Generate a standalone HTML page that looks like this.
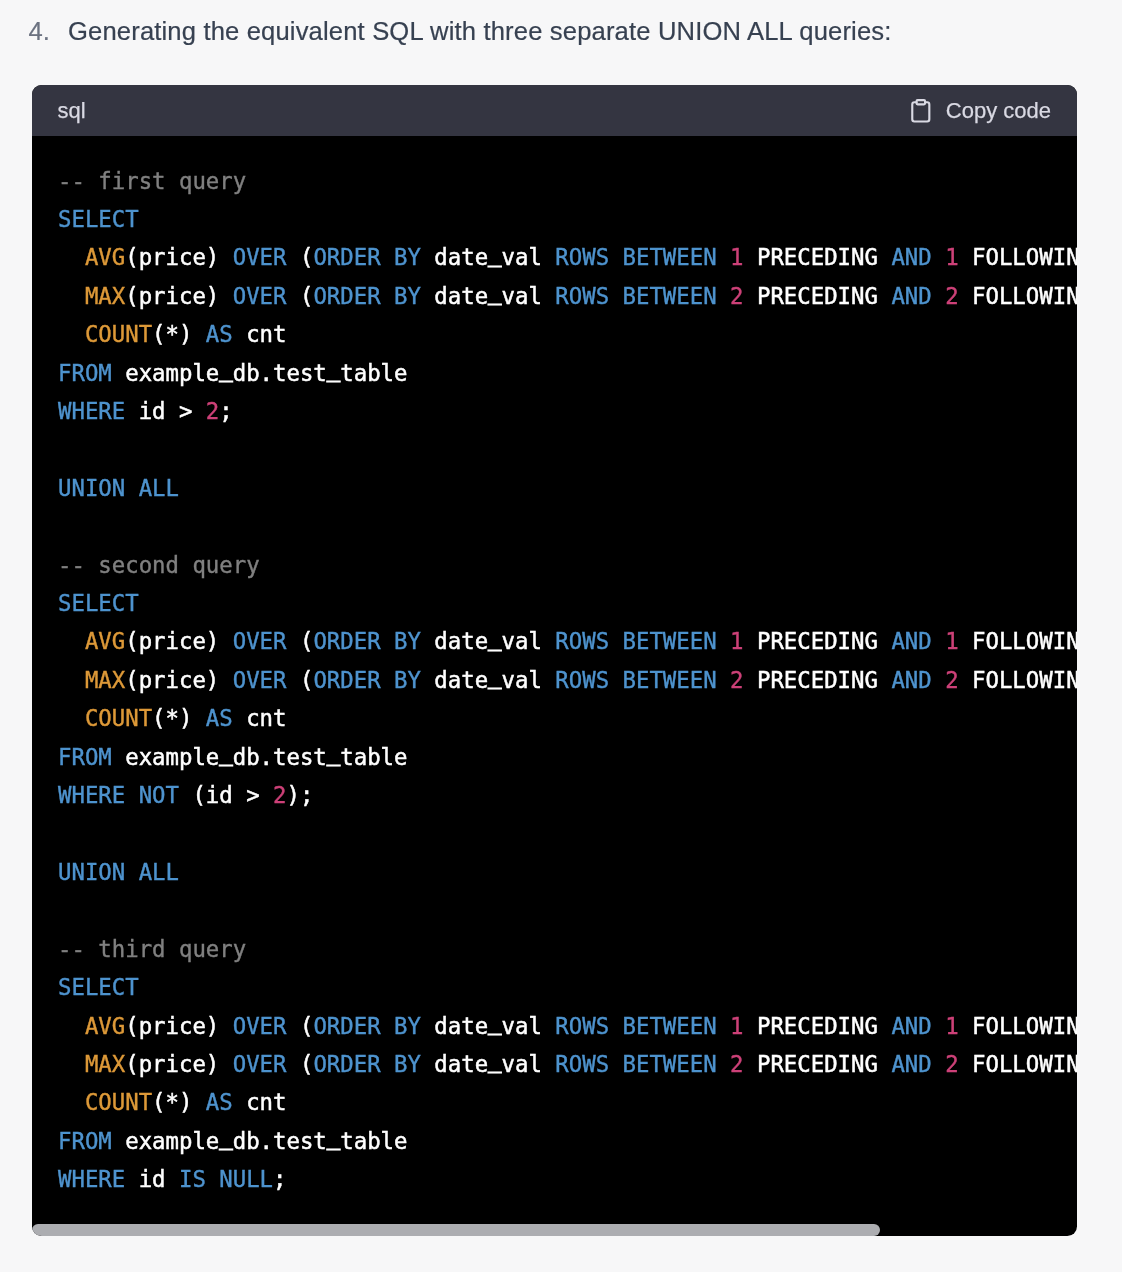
<!DOCTYPE html>
<html lang="en">
<head>
<meta charset="utf-8">
<title>SQL UNION ALL</title>
<style>
html,body{margin:0;padding:0;}
body{width:1122px;height:1272px;background:#f7f7f8;position:relative;overflow:hidden;
  font-family:"Liberation Sans",Arial,sans-serif;color:#374151;}
.title{position:absolute;left:0;top:8.6px;height:44.8px;line-height:44.8px;font-size:25.6px;white-space:nowrap;}
.title .num{position:absolute;left:28.5px;color:#6b7280;-webkit-text-stroke:0.2px #6b7280}
.title .txt{position:absolute;left:68px;letter-spacing:0.15px;-webkit-text-stroke:0.2px #374151}
.block{position:absolute;left:32px;top:85px;width:1045px;height:1151px;background:#000;border-radius:9.6px;overflow:hidden;}
.hdr{position:absolute;left:0;top:0;right:0;height:51px;background:#343541;color:#d9d9e3;font-size:22px;line-height:51px;}
.hdr{-webkit-text-stroke:0.25px #d9d9e3}
.hdr .lang{position:absolute;left:25.6px;top:0;}
.hdr .copy{position:absolute;right:26px;top:0;}
.hdr svg{position:absolute;left:875.8px;top:12.9px;}
pre{position:absolute;left:25.6px;top:76.6px;margin:0;font-family:"DejaVu Sans Mono","Liberation Mono",monospace;font-size:23.5px;transform:scaleX(0.94996);transform-origin:0 0;line-height:38.4px;color:#fff;white-space:pre;}
pre{-webkit-text-stroke:0.5px #fff}
.k,.b,.n,.c{-webkit-text-stroke:0.4px currentColor}
.k{color:#4e93ce}.b{color:#dd9938}.n{color:#cd4178}.c{color:#808080}
.u{position:relative;top:-4.5px;-webkit-text-stroke:1.1px #fff}
.sb{position:absolute;left:0;bottom:0;width:848px;height:12px;border-radius:6px;background:#acadb1;}
</style>
</head>
<body>
<div class="title" style="will-change:transform"><span class="num">4.</span><span class="txt">Generating the equivalent SQL with three separate UNION ALL queries:</span></div>
<div class="block" style="will-change:transform">
<div class="hdr"><span class="lang">sql</span>
<svg width="25.6" height="25.6" viewBox="0 0 24 24" fill="none" stroke="#d9d9e3" stroke-width="2" stroke-linecap="round" stroke-linejoin="round"><path d="M16 4h2a2 2 0 0 1 2 2v14a2 2 0 0 1-2 2H6a2 2 0 0 1-2-2V6a2 2 0 0 1 2-2h2"/><rect x="8" y="2" width="8" height="4" rx="1" ry="1"/></svg>
<span class="copy">Copy code</span></div>
<pre><span class="c">-- first query</span>
<span class="k">SELECT</span>
  <span class="b">AVG</span>(price) <span class="k">OVER</span> (<span class="k">ORDER</span> <span class="k">BY</span> date<span class="u">_</span>val <span class="k">ROWS</span> <span class="k">BETWEEN</span> <span class="n">1</span> PRECEDING <span class="k">AND</span> <span class="n">1</span> FOLLOWING) <span class="k">AS</span> avg_price,
  <span class="b">MAX</span>(price) <span class="k">OVER</span> (<span class="k">ORDER</span> <span class="k">BY</span> date<span class="u">_</span>val <span class="k">ROWS</span> <span class="k">BETWEEN</span> <span class="n">2</span> PRECEDING <span class="k">AND</span> <span class="n">2</span> FOLLOWING) <span class="k">AS</span> max_price,
  <span class="b">COUNT</span>(*) <span class="k">AS</span> cnt
<span class="k">FROM</span> example<span class="u">_</span>db.test<span class="u">_</span>table
<span class="k">WHERE</span> id &gt; <span class="n">2</span>;

<span class="k">UNION</span> <span class="k">ALL</span>

<span class="c">-- second query</span>
<span class="k">SELECT</span>
  <span class="b">AVG</span>(price) <span class="k">OVER</span> (<span class="k">ORDER</span> <span class="k">BY</span> date<span class="u">_</span>val <span class="k">ROWS</span> <span class="k">BETWEEN</span> <span class="n">1</span> PRECEDING <span class="k">AND</span> <span class="n">1</span> FOLLOWING) <span class="k">AS</span> avg_price,
  <span class="b">MAX</span>(price) <span class="k">OVER</span> (<span class="k">ORDER</span> <span class="k">BY</span> date<span class="u">_</span>val <span class="k">ROWS</span> <span class="k">BETWEEN</span> <span class="n">2</span> PRECEDING <span class="k">AND</span> <span class="n">2</span> FOLLOWING) <span class="k">AS</span> max_price,
  <span class="b">COUNT</span>(*) <span class="k">AS</span> cnt
<span class="k">FROM</span> example<span class="u">_</span>db.test<span class="u">_</span>table
<span class="k">WHERE</span> <span class="k">NOT</span> (id &gt; <span class="n">2</span>);

<span class="k">UNION</span> <span class="k">ALL</span>

<span class="c">-- third query</span>
<span class="k">SELECT</span>
  <span class="b">AVG</span>(price) <span class="k">OVER</span> (<span class="k">ORDER</span> <span class="k">BY</span> date<span class="u">_</span>val <span class="k">ROWS</span> <span class="k">BETWEEN</span> <span class="n">1</span> PRECEDING <span class="k">AND</span> <span class="n">1</span> FOLLOWING) <span class="k">AS</span> avg_price,
  <span class="b">MAX</span>(price) <span class="k">OVER</span> (<span class="k">ORDER</span> <span class="k">BY</span> date<span class="u">_</span>val <span class="k">ROWS</span> <span class="k">BETWEEN</span> <span class="n">2</span> PRECEDING <span class="k">AND</span> <span class="n">2</span> FOLLOWING) <span class="k">AS</span> max_price,
  <span class="b">COUNT</span>(*) <span class="k">AS</span> cnt
<span class="k">FROM</span> example<span class="u">_</span>db.test<span class="u">_</span>table
<span class="k">WHERE</span> id <span class="k">IS</span> <span class="k">NULL</span>;</pre>
<div class="sb"></div>
</div>
</body>
</html>
